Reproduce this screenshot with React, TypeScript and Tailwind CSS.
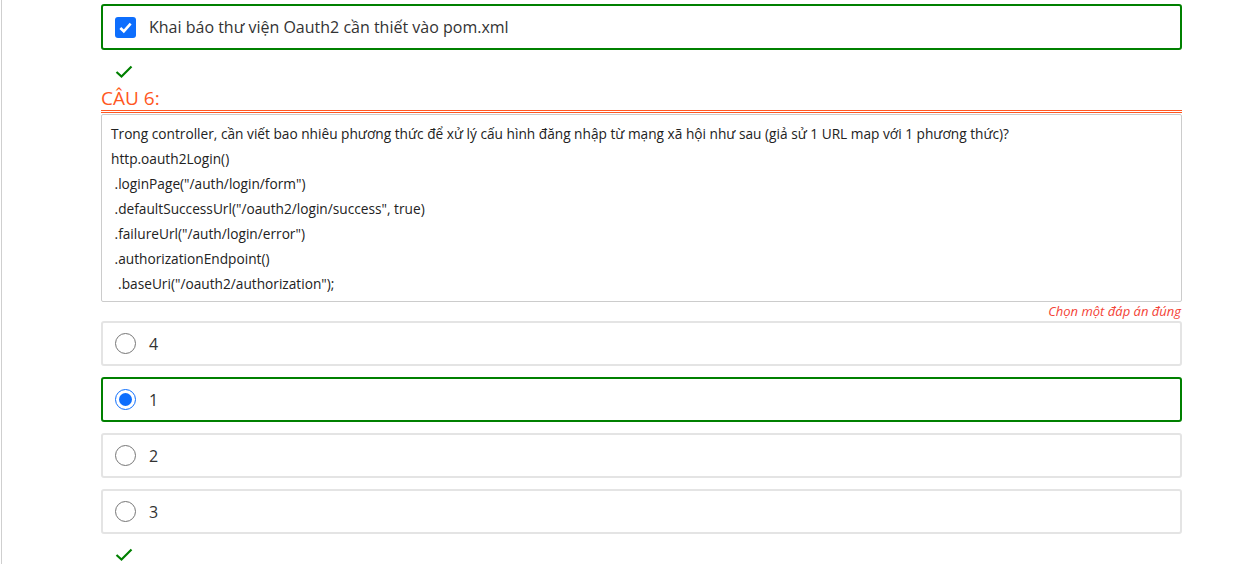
import React from "react";

const Check = () => (
  <svg viewBox="0 0 18 14" width="18" height="14" className="block">
    <path d="M1.5 7 L6.5 11.5 L16.5 1.5" fill="none" stroke="#008000" strokeWidth="2.2" />
  </svg>
);

const Radio = ({ checked }: { checked?: boolean }) =>
  checked ? (
    <span className="w-[21px] h-[21px] rounded-full border-[1.5px] border-[#0d6efd] flex items-center justify-center shrink-0">
      <span className="w-[13px] h-[13px] rounded-full bg-[#0d6efd]" />
    </span>
  ) : (
    <span className="w-[21px] h-[21px] rounded-full border border-[#767676] shrink-0" />
  );

const Option = ({ label, checked }: { label: string; checked?: boolean }) => (
  <div
    className={`h-[45px] rounded-[3px] border-2 flex items-center pl-[12px] gap-[13px] ${
      checked ? "border-[#008000]" : "border-[#e4e4e4]"
    }`}
  >
    <Radio checked={checked} />
    <span className="text-[16px] text-[#333]">{label}</span>
  </div>
);

const lines = [
  "Trong controller, cần viết bao nhiêu phương thức để xử lý cấu hình đăng nhập từ mạng xã hội như sau (giả sử 1 URL map với 1 phương thức)?",
  "http.oauth2Login()",
  "\u00a0.loginPage(\"/auth/login/form\")",
  "\u00a0.defaultSuccessUrl(\"/oauth2/login/success\", true)",
  "\u00a0.failureUrl(\"/auth/login/error\")",
  "\u00a0.authorizationEndpoint()",
  "\u00a0\u00a0.baseUri(\"/oauth2/authorization\");",
];

export default function App() {
  return (
    <div
      className="w-[1245px] h-[564px] overflow-hidden bg-white"
      style={{ fontFamily: '"Open Sans", "Noto Sans", sans-serif' }}
    >
      <div className="h-full ml-[1px] border-l border-[#cfcfcf] pl-[99px] w-[1181px]">
        <div className="pt-[4px]">
          <div className="h-[46px] border-2 border-[#008000] rounded-[3px] flex items-center pl-[12px] gap-[13px]">
            <span className="w-[21px] h-[21px] rounded-[3px] bg-[#0d6efd] flex items-center justify-center mt-[1px]">
              <svg viewBox="0 0 16 16" width="15" height="15">
                <path d="M2.5 8.5 L6.2 12 L13.5 3.8" fill="none" stroke="#fff" strokeWidth="2.8" />
              </svg>
            </span>
            <span className="text-[16px] text-[#333]">Khai báo thư viện Oauth2 cần thiết vào pom.xml</span>
          </div>
        </div>
        <div className="pl-[14px] pt-[15px] h-[36px]">
          <Check />
        </div>
        <div className="text-[19px] leading-[24px] font-normal text-[#ff5722] border-b-[3px] border-double border-b-[#ff5722]">
          CÂU 6:
        </div>
        <div className="mt-[1px] border border-[#cccccc] rounded-[2px] px-[9px] pt-[6px] pb-[5px] text-[13.7px] leading-[25px] text-[#222]">
          {lines.map((l, i) => (
            <div key={i}>{l}</div>
          ))}
        </div>
        <div className="text-right italic text-[13px] leading-[19px] text-[#f44336] pr-[1px]">Chọn một đáp án đúng</div>
        <div className="flex flex-col gap-[11px]">
          <Option label="4" />
          <Option label="1" checked />
          <Option label="2" />
          <Option label="3" />
        </div>
        <div className="pl-[14px] pt-[14px]">
          <Check />
        </div>
      </div>
    </div>
  );
}
